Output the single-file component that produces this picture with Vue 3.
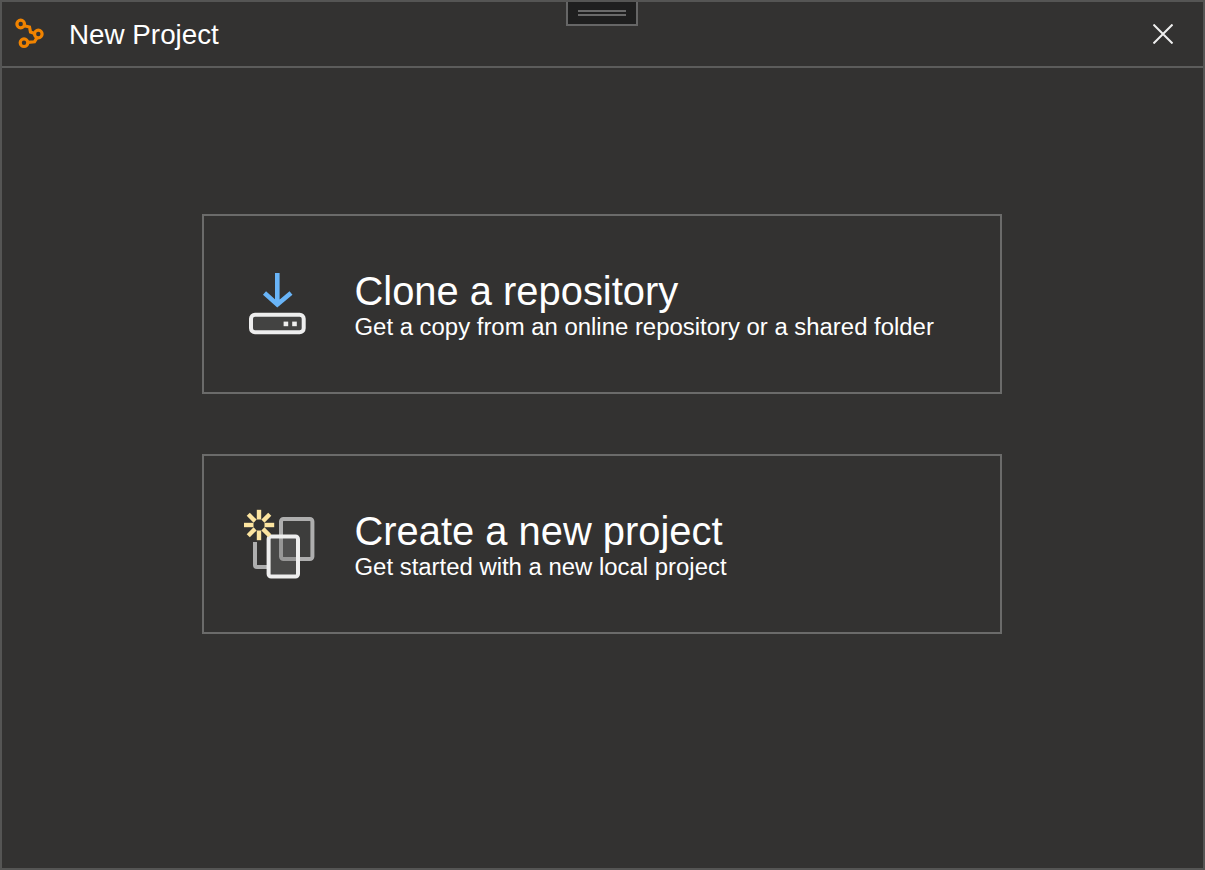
<script setup>
const rays = [0, 45, 90, 135, 180, 225, 270, 315]
</script>

<template>
  <div class="window">
    <header class="titlebar">
      <svg class="logo" width="36" height="36" viewBox="0 0 36 36" fill="none">
        <g class="logo-art">
          <circle cx="8.7" cy="8" r="3.8" />
          <circle cx="26.3" cy="18" r="3.8" />
          <circle cx="12" cy="26.7" r="3.8" />
          <path d="M12.2 9.8 L17.5 11 L18.5 16 L22.5 17.5" />
          <path d="M15.8 26.4 L22.5 25.8 L25 21.6" />
        </g>
      </svg>
      <h1 class="window-title">New Project</h1>
      <svg class="close" width="20" height="20" viewBox="0 0 20 20" fill="none">
        <path d="M0.5 0.5 L19.5 19.5 M19.5 0.5 L0.5 19.5" />
      </svg>
    </header>

    <div class="grip"><span></span><span></span></div>

    <main class="content">
      <section class="card">
        <svg class="card-icon" width="80" height="80" viewBox="0 0 80 80" fill="none">
          <path class="arrow" d="M33.3 9 V40 M20.5 29 L33.3 40.5 L47 29" />
          <rect class="drive" x="7" y="50.7" width="52.7" height="17.6" rx="4" />
          <rect class="dot" x="39.6" y="57.6" width="4.6" height="4.6" />
          <rect class="dot" x="48.2" y="57.6" width="4.6" height="4.6" />
        </svg>
        <div class="card-text">
          <h2>Clone a repository</h2>
          <p>Get a copy from an online repository or a shared folder</p>
        </div>
      </section>

      <section class="card">
        <svg class="card-icon" width="80" height="80" viewBox="0 0 80 80" fill="none">
          <rect class="page-back" x="37" y="15" width="31.4" height="40" rx="2.5" />
          <path class="page-left" d="M11 38 V61 Q11 63 13 63 H24" />
          <rect class="page-front" x="24.6" y="32.5" width="29.4" height="40" rx="2.5" />
          <g class="spark">
            <path
              v-for="r in rays"
              :key="r"
              d="M15 15.5 V5.8"
              :transform="`rotate(${r} 15 21)`"
            />
          </g>
        </svg>
        <div class="card-text">
          <h2>Create a new project</h2>
          <p>Get started with a new local project</p>
        </div>
      </section>
    </main>
  </div>
</template>

<style>
html, body {
  margin: 0;
  background: #333231;
}
</style>

<style scoped>
.window {
  position: relative;
  box-sizing: border-box;
  width: 1205px;
  height: 870px;
  border: 2px solid #555554;
  background: #333231;
  color: #fff;
  font-family: "Liberation Sans", Arial, sans-serif;
  display: flex;
  flex-direction: column;
  overflow: hidden;
}
.titlebar {
  box-sizing: border-box;
  height: 66px;
  flex: none;
  display: flex;
  align-items: center;
  border-bottom: 2px solid #5c5c5b;
  padding-left: 10px;
  padding-right: 30px;
}
.logo {
  flex: none;
  margin-right: 21px;
}
.logo-art {
  stroke: #f08300;
  stroke-width: 3.2;
  filter: blur(0.5px);
}
.window-title {
  margin: 2px 0 0;
  flex: 1;
  font-size: 27.8px;
  font-weight: 400;
  line-height: 32px;
}
.close {
  flex: none;
  stroke: #eeeeee;
  stroke-width: 2;
}
.grip {
  position: absolute;
  top: -2px;
  left: 564px;
  box-sizing: border-box;
  width: 72px;
  height: 26px;
  border: 2px solid #666666;
  border-top-color: #555554;
  background: #1f1f1f;
  display: flex;
  flex-direction: column;
  align-items: center;
  gap: 2px;
  padding-top: 8px;
}
.grip span {
  display: block;
  width: 48px;
  height: 2px;
  background: #6a6a6a;
}
.content {
  flex: 1;
  display: flex;
  flex-direction: column;
  align-items: center;
  gap: 60px;
  padding-top: 146px;
  padding-right: 2px;
}
.card {
  box-sizing: border-box;
  width: 800px;
  height: 180px;
  border: 2px solid #6b6b6a;
  padding-left: 40px;
  display: flex;
  align-items: center;
  gap: 31px;
}
.card-icon {
  flex: none;
}
.card-text {
  padding-top: 2px;
}
.card-text h2 {
  margin: 0;
  font-size: 39.9px;
  font-weight: 400;
  line-height: 44px;
}
.card-text p {
  margin: 0;
  font-size: 23.92px;
  line-height: 28px;
}
.arrow {
  stroke: #69b4f7;
  stroke-width: 4.6;
}
.drive {
  stroke: #eeeeee;
  stroke-width: 4;
  fill: #434342;
}
.dot {
  fill: #eeeeee;
}
.page-back {
  stroke: #aeaeae;
  stroke-width: 4;
  fill: #3d3d3c;
}
.page-left {
  stroke: #aeaeae;
  stroke-width: 4;
}
.page-front {
  stroke: #eeeeee;
  stroke-width: 4;
  fill: rgba(110, 110, 110, 0.38);
}
.spark {
  stroke: #fde5a0;
  stroke-width: 4.4;
}
</style>
